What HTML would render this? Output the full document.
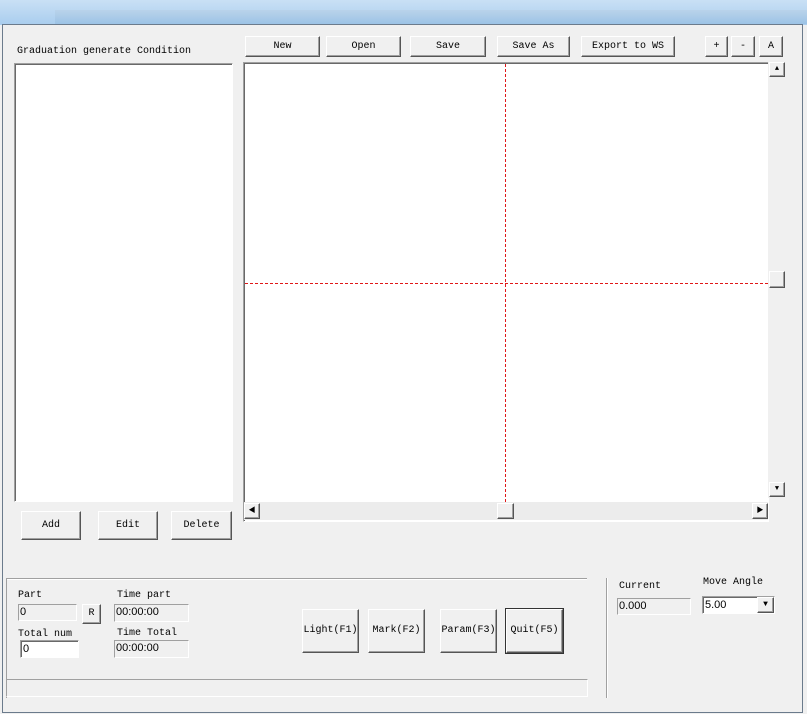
<!DOCTYPE html>
<html><head><style>
body{margin:0;width:807px;height:714px;overflow:hidden;background:#f0f0f0;font-family:"Liberation Mono","Noto Sans CJK SC",monospace;font-size:10px;color:#000;position:relative}
.a{position:absolute}
.btn{position:absolute;background:#f0f0f0;border:1px solid;border-color:#fff #555 #555 #fff;box-shadow:inset -1px -1px 0 #a0a0a0;text-align:center;box-sizing:border-box;font-size:10px}
.sunk{position:absolute;background:#fff;border:1px solid;border-color:#a0a0a0 #fff #fff #a0a0a0;box-shadow:inset 1px 1px 0 #696969;box-sizing:border-box}
.ro{position:absolute;background:#f0f0f0;border:1px solid;border-color:#a0a0a0 #fff #fff #a0a0a0;box-sizing:border-box;font-family:"Liberation Sans",sans-serif;font-size:11px;line-height:15px;padding-left:1px}
.lb{position:absolute;font-size:10px}
</style></head><body>
<div class="a" style="left:0;top:0;width:807px;height:25px;background:linear-gradient(#c9e0f5,#a9cdee)"></div>
<div class="a" style="left:55px;top:10px;width:752px;height:14px;background:linear-gradient(#b9d3ea,#9cc3e6)"></div>
<div class="a" style="left:2px;top:24px;width:799px;height:687px;background:#f0f0f0;border:1px solid #6b7b8c"></div>

<div class="lb" style="left:17px;top:46px">Graduation generate Condition</div>
<div class="sunk" style="left:14px;top:63px;width:219px;height:439px"></div>
<div class="btn" style="left:21px;top:511px;width:60px;height:29px;line-height:27px">Add</div>
<div class="btn" style="left:98px;top:511px;width:60px;height:29px;line-height:27px">Edit</div>
<div class="btn" style="left:171px;top:511px;width:61px;height:29px;line-height:27px">Delete</div>

<div class="btn" style="left:245px;top:36px;width:75px;height:21px;line-height:19px">New</div>
<div class="btn" style="left:326px;top:36px;width:75px;height:21px;line-height:19px">Open</div>
<div class="btn" style="left:410px;top:36px;width:76px;height:21px;line-height:19px">Save</div>
<div class="btn" style="left:497px;top:36px;width:73px;height:21px;line-height:19px">Save As</div>
<div class="btn" style="left:581px;top:36px;width:94px;height:21px;line-height:19px">Export to WS</div>
<div class="btn" style="left:705px;top:36px;width:23px;height:21px;line-height:19px">+</div>
<div class="btn" style="left:731px;top:36px;width:24px;height:21px;line-height:19px">-</div>
<div class="btn" style="left:759px;top:36px;width:24px;height:21px;line-height:19px">A</div>

<div class="sunk" style="left:243px;top:62px;width:526px;height:460px"></div>
<div class="a" style="left:245px;top:64px;width:523px;height:438px;background:#fff"></div>
<div class="a" style="left:505px;top:64px;width:1px;height:438px;background:repeating-linear-gradient(to bottom,#e01818 0 3px,transparent 3px 5px)"></div>
<div class="a" style="left:245px;top:283px;width:523px;height:1px;background:repeating-linear-gradient(to right,#e01818 0 3px,transparent 3px 5px)"></div>
<div class="a" style="left:768px;top:62px;width:17px;height:436px;background:#f0f0f0"></div>
<div class="btn" style="left:769px;top:62px;width:16px;height:15px;line-height:12px;font-size:7px">▲</div>
<div class="btn" style="left:769px;top:271px;width:16px;height:17px"></div>
<div class="btn" style="left:769px;top:482px;width:16px;height:15px;line-height:12px;font-size:7px">▼</div>
<div class="a" style="left:244px;top:502px;width:524px;height:18px;background:#ececec"></div>
<div class="btn" style="left:244px;top:503px;width:16px;height:16px;line-height:14px;font-size:7px">◀</div>
<div class="btn" style="left:497px;top:503px;width:17px;height:16px"></div>
<div class="btn" style="left:752px;top:503px;width:16px;height:16px;line-height:14px;font-size:7px">▶</div>

<div class="a" style="left:6px;top:578px;width:581px;height:0;border-top:1px solid #a0a0a0;border-bottom:1px solid #fff"></div>
<div class="a" style="left:6px;top:578px;width:0;height:120px;border-left:1px solid #a0a0a0"></div>
<div class="lb" style="left:18px;top:590px">Part</div>
<div class="ro" style="left:18px;top:604px;width:59px;height:17px">0</div>
<div class="btn" style="left:82px;top:604px;width:19px;height:20px;line-height:18px">R</div>
<div class="lb" style="left:18px;top:629px">Total num</div>
<div class="sunk" style="left:20px;top:640px;width:59px;height:18px;line-height:16px;padding-left:2px;font-family:'Liberation Sans',sans-serif;font-size:11px">0</div>
<div class="lb" style="left:117px;top:590px">Time part</div>
<div class="ro" style="left:114px;top:604px;width:75px;height:18px">00:00:00</div>
<div class="lb" style="left:117px;top:628px">Time Total</div>
<div class="ro" style="left:114px;top:640px;width:75px;height:18px">00:00:00</div>
<div class="btn" style="left:302px;top:609px;width:57px;height:44px;line-height:42px">Light(F1)</div>
<div class="btn" style="left:368px;top:609px;width:57px;height:44px;line-height:42px">Mark(F2)</div>
<div class="btn" style="left:440px;top:609px;width:57px;height:44px;line-height:42px">Param(F3)</div>
<div class="btn" style="left:506px;top:609px;width:57px;height:44px;line-height:42px;outline:1px solid #333">Quit(F5)</div>
<div class="ro" style="left:6px;top:679px;width:582px;height:18px"></div>
<div class="a" style="left:606px;top:578px;width:0;height:120px;border-left:1px solid #a0a0a0;border-right:1px solid #fff"></div>
<div class="lb" style="left:619px;top:581px">Current</div>
<div class="ro" style="left:617px;top:598px;width:74px;height:17px">0.000</div>
<div class="lb" style="left:703px;top:577px">Move Angle</div>
<div class="sunk" style="left:702px;top:596px;width:73px;height:18px;line-height:16px;padding-left:2px;font-family:'Liberation Sans',sans-serif;font-size:11px">5.00</div>
<div class="btn" style="left:757px;top:597px;width:17px;height:16px;line-height:14px;font-size:8px">▼</div>
</body></html>
